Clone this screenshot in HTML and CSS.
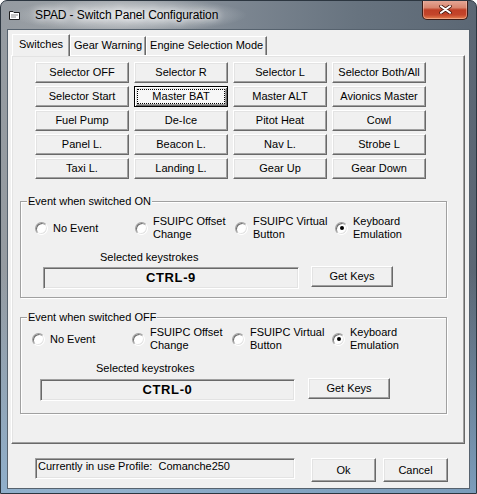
FILE: index.html
```html
<!DOCTYPE html>
<html>
<head>
<meta charset="utf-8">
<title>SPAD - Switch Panel Configuration</title>
<link rel="stylesheet" href="styles.css">
</head>
<body>
<div class="window">
  <div class="titlebar">
    <svg class="app-icon" width="11" height="10" viewBox="0 0 11 10"><path d="M0.5 1.5h3.5l1 1h5.5v7h-10z" fill="#fff" stroke="#1e1e1e"/><path d="M2 5h7M2 7h5" stroke="#8a8a8a"/></svg>
    <span class="title">SPAD - Switch Panel Configuration</span>
    <div class="close"><svg width="13" height="9" viewBox="0 0 13 9"><path d="M2 1.2l9 6.6M11 1.2l-9 6.6" stroke="#4a1d14" stroke-width="3.6" stroke-linecap="round"/><path d="M2 1.2l9 6.6M11 1.2l-9 6.6" stroke="#fff" stroke-width="2" stroke-linecap="round"/></svg></div>
  </div>
  <div class="client">
    <div class="tabs">
      <div class="tab active">Switches</div>
      <div class="tab">Gear Warning</div>
      <div class="tab">Engine Selection Mode</div>
    </div>
    <div class="panel">
      <div class="grid">
        <button class="btn">Selector OFF</button>
        <button class="btn">Selector R</button>
        <button class="btn">Selector L</button>
        <button class="btn">Selector Both/All</button>
        <button class="btn">Selector Start</button>
        <button class="btn default">Master BAT</button>
        <button class="btn">Master ALT</button>
        <button class="btn">Avionics Master</button>
        <button class="btn">Fuel Pump</button>
        <button class="btn">De-Ice</button>
        <button class="btn">Pitot Heat</button>
        <button class="btn">Cowl</button>
        <button class="btn">Panel L.</button>
        <button class="btn">Beacon L.</button>
        <button class="btn">Nav L.</button>
        <button class="btn">Strobe L</button>
        <button class="btn">Taxi L.</button>
        <button class="btn">Landing L.</button>
        <button class="btn">Gear Up</button>
        <button class="btn">Gear Down</button>
      </div>

      <div class="group group-on">
        <div class="group-title">Event when switched ON</div>
        <div class="radios">
          <div class="radio-item"><span class="radio"></span><span class="radio-label">No Event</span></div>
          <div class="radio-item"><span class="radio"></span><span class="radio-label">FSUIPC Offset<br>Change</span></div>
          <div class="radio-item"><span class="radio"></span><span class="radio-label">FSUIPC Virtual<br>Button</span></div>
          <div class="radio-item"><span class="radio checked"></span><span class="radio-label">Keyboard<br>Emulation</span></div>
        </div>
        <div class="keys-label">Selected keystrokes</div>
        <div class="keys-row">
          <div class="keys-field">CTRL-9</div>
          <button class="btn getkeys">Get Keys</button>
        </div>
      </div>

      <div class="group group-off">
        <div class="group-title">Event when switched OFF</div>
        <div class="radios">
          <div class="radio-item"><span class="radio"></span><span class="radio-label">No Event</span></div>
          <div class="radio-item"><span class="radio"></span><span class="radio-label">FSUIPC Offset<br>Change</span></div>
          <div class="radio-item"><span class="radio"></span><span class="radio-label">FSUIPC Virtual<br>Button</span></div>
          <div class="radio-item"><span class="radio checked"></span><span class="radio-label">Keyboard<br>Emulation</span></div>
        </div>
        <div class="keys-label">Selected keystrokes</div>
        <div class="keys-row">
          <div class="keys-field">CTRL-0</div>
          <button class="btn getkeys">Get Keys</button>
        </div>
      </div>
    </div>
    <div class="footer">
      <div class="profile">Currently in use Profile:&nbsp; Comanche250</div>
      <button class="btn ok">Ok</button>
      <button class="btn cancel">Cancel</button>
    </div>
  </div>
</div>
</body>
</html>
```

FILE: styles.css
```css
* { box-sizing: border-box; }
html, body { margin: 0; padding: 0; }
body {
  width: 477px;
  height: 494px;
  overflow: hidden;
  background: #ffffff;
  font-family: "Liberation Sans", Arial, sans-serif;
  font-size: 11px;
  color: #000;
}

.window {
  width: 477px;
  height: 494px;
  border: 1px solid #2c3640;
  border-radius: 7px 7px 0 0;
  overflow: hidden;
  display: flex;
  flex-direction: column;
  background:
    radial-gradient(ellipse 118px 17px at 128px 14px, rgba(226,229,232,0.95), rgba(226,229,232,0)),
    linear-gradient(to bottom, rgba(0,0,0,0) 55%, rgba(140,185,225,0.65) 100%),
    linear-gradient(to right, #959ba1 0%, #9da2a7 25%, #7c8691 50%, #67737f 75%, #5b6774 100%);
}

/* title bar */
.titlebar {
  height: 29px;
  display: flex;
  align-items: flex-start;
  flex: none;
}
.app-icon {
  margin: 9px 0 0 8px;
  flex: none;
}
.title {
  margin: 7px 0 0 15px;
  font-size: 12px;
  line-height: 15px;
  letter-spacing: -0.1px;
  color: #000;
  text-shadow: 0 0 6px rgba(255,255,255,0.9), 0 0 10px rgba(255,255,255,0.7);
}
.close {
  margin: -1px 8px 0 auto;
  width: 46px;
  height: 20px;
  border: 1px solid #3b1c17;
  border-top: 0;
  border-radius: 0 0 5px 5px;
  background: linear-gradient(to bottom, #e6ab9b 0%, #d8866f 40%, #bf3f26 52%, #c4452b 78%, #e5804f 100%);
  box-shadow: inset 0 0 0 1px rgba(255,210,195,0.45);
  display: flex;
  align-items: center;
  justify-content: center;
}

/* client area */
.client {
  margin: 0 7px;
  height: 458px;
  flex: none;
  background: #f0f0f0;
  box-shadow: 0 0 0 1px #56626e;
  display: flex;
  flex-direction: column;
}

/* tabs */
.tabs {
  display: flex;
  align-items: flex-start;
  height: 22px;
  margin: 4px 0 0 4px;
  position: relative;
  z-index: 1;
}
.tab {
  height: 19px;
  margin-top: 2px;
  padding: 0 3px;
  line-height: 17px;
  background: #f0f0f0;
  border-top: 1px solid #fff;
  border-left: 1px solid #fff;
  border-right: 1px solid #696969;
  box-shadow: inset -1px 0 #a0a0a0;
  white-space: nowrap;
}
.tab.active {
  height: 22px;
  margin-top: 0;
  padding: 0 6px;
  line-height: 19px;
}

/* tab panel */
.panel {
  margin: -1px 0 0 3px;
  width: 454px;
  height: 389px;
  flex: none;
  border: 1px solid;
  border-color: #fff #696969 #696969 #fff;
  box-shadow: inset -1px -1px #a0a0a0, inset 1px 1px #e3e3e3;
  background: #f0f0f0;
}

.grid {
  margin: 6px 0 0 23px;
  display: grid;
  grid-template-columns: repeat(4, 94px);
  grid-auto-rows: 21px;
  gap: 3px 5px;
}

/* classic buttons */
.btn {
  font: inherit;
  color: #000;
  background: #f0f0f0;
  border: 1px solid;
  border-color: #fff #696969 #696969 #fff;
  box-shadow: inset -1px -1px #a0a0a0, inset 1px 1px #e3e3e3;
  padding: 0;
  margin: 0;
  white-space: nowrap;
  line-height: 13px;
}
.btn.default {
  background: #f7f7f7;
  border-color: #000;
  box-shadow: inset 1px 1px #fff, inset -1px -1px #696969, inset 2px 2px #e3e3e3, inset -2px -2px #a0a0a0;
  outline: 1px dotted #000;
  outline-offset: -4px;
}

/* group boxes */
.group {
  margin: 22px 0 0 8px;
  width: 427px;
  height: 97px;
  border: 1px solid #a0a0a0;
  box-shadow: inset 1px 1px #fff, 1px 1px #fff;
}
.group-off { margin-top: 19px; }

.group-title {
  display: table;
  margin: -7px 0 0 6px;
  padding: 0 1px;
  line-height: 13px;
  background: #f0f0f0;
}

.radios {
  display: grid;
  grid-template-columns: repeat(4, 100px);
  height: 26px;
  margin-top: 7px;
  padding-left: 14px;
}
.group-off .radios { margin-top: 2px; padding-left: 11px; }

.radio-item {
  display: flex;
  align-items: center;
  gap: 5px;
}
.radio-label { line-height: 13px; }
.radio {
  flex: none;
  width: 13px;
  height: 13px;
  border-radius: 50%;
  border: 1px solid;
  border-color: #a0a0a0 #fff #fff #a0a0a0;
  box-shadow: inset 1px 1px #6f6f6f, inset -1px -1px #e3e3e3;
  background: #fff;
  display: flex;
  align-items: center;
  justify-content: center;
}
.radio.checked::after {
  content: "";
  width: 4px;
  height: 4px;
  border-radius: 50%;
  background: #000;
}

.keys-label {
  margin: 10px 0 0 79px;
  line-height: 13px;
}
.group-off .keys-label { margin: 10px 0 0 75px; }

.keys-row {
  display: flex;
  align-items: flex-start;
  margin-top: 3px;
  padding-left: 22px;
}
.group-off .keys-row { margin-top: 4px; padding-left: 19px; }

.keys-field {
  width: 256px;
  height: 22px;
  border: 1px solid;
  border-color: #a0a0a0 #fff #fff #a0a0a0;
  box-shadow: inset 1px 1px #696969, inset -1px -1px #e3e3e3;
  text-align: center;
  font-weight: bold;
  font-size: 13px;
  letter-spacing: 0.6px;
  line-height: 20px;
}
.group-off .keys-field { width: 255px; }

.getkeys {
  margin: -1px 0 0 12px;
  width: 82px;
  height: 21px;
}
.group-off .getkeys { margin-left: 13px; }

/* footer */
.footer {
  display: flex;
  align-items: flex-start;
  margin-top: 14px;
  padding-left: 27px;
}
.profile {
  width: 260px;
  height: 21px;
  border: 1px solid;
  border-color: #a0a0a0 #fff #fff #a0a0a0;
  box-shadow: inset 1px 1px #696969, inset -1px -1px #e3e3e3;
  padding: 1px 0 0 2px;
  line-height: 13px;
  white-space: nowrap;
}
.ok {
  margin-left: 16px;
  width: 65px;
  height: 24px;
}
.cancel {
  margin-left: 7px;
  width: 65px;
  height: 24px;
}
```
